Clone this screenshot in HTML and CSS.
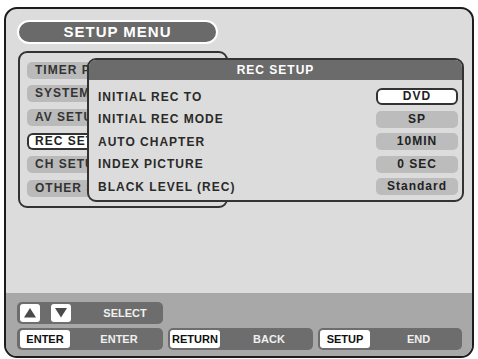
FILE: index.html
```html
<!DOCTYPE html>
<html lang="en">
<head>
    <meta charset="UTF-8">
    <meta name="viewport" content="width=device-width, initial-scale=1.0">
    <title>Setup Menu</title>
    <link rel="stylesheet" href="styles.css">
</head>
<body>
    <div class="screen">
        <div class="main">
            <div class="title">SETUP MENU</div>

            <div class="menu-area">
                <ul class="menu">
                    <li>TIMER PROGRAMMING</li>
                    <li>SYSTEM SETUP</li>
                    <li>AV SETUP</li>
                    <li class="active">REC SETUP</li>
                    <li>CH SETUP</li>
                    <li>OTHER SETUP</li>
                </ul>

                <!-- sub menu opened over the list -->
                <div class="popup">
                    <div class="popup-header">REC SETUP</div>
                    <div class="popup-body">
                        <div class="row">
                            <span class="label">INITIAL REC TO</span>
                            <span class="value selected">DVD</span>
                        </div>
                        <div class="row">
                            <span class="label">INITIAL REC MODE</span>
                            <span class="value">SP</span>
                        </div>
                        <div class="row">
                            <span class="label">AUTO CHAPTER</span>
                            <span class="value">10MIN</span>
                        </div>
                        <div class="row">
                            <span class="label">INDEX PICTURE</span>
                            <span class="value">0 SEC</span>
                        </div>
                        <div class="row">
                            <span class="label">BLACK LEVEL (REC)</span>
                            <span class="value">Standard</span>
                        </div>
                    </div>
                </div>
            </div>
        </div>

        <div class="guide">
            <div class="guide-row">
                <div class="key-group first">
                    <span class="key arrow">
                        <svg width="20" height="18" viewBox="0 0 20 18"><polygon points="4,13.5 16,13.5 10,4" fill="#4a4a4a"/></svg>
                    </span>
                    <span class="key arrow">
                        <svg width="20" height="18" viewBox="0 0 20 18"><polygon points="4,4 16,4 10,13.5" fill="#4a4a4a"/></svg>
                    </span>
                    <span class="guide-label">SELECT</span>
                </div>
            </div>
            <div class="guide-row">
                <div class="key-group first">
                    <span class="key">ENTER</span>
                    <span class="guide-label">ENTER</span>
                </div>
                <div class="key-group second">
                    <span class="key">RETURN</span>
                    <span class="guide-label">BACK</span>
                </div>
                <div class="key-group third">
                    <span class="key">SETUP</span>
                    <span class="guide-label">END</span>
                </div>
            </div>
        </div>
    </div>
</body>
</html>
```

FILE: styles.css
```css
body {
    margin: 0;
    padding: 0;
    background-color: #fff;
    font-family: "Liberation Sans", Arial, sans-serif;
    font-weight: bold;
}

.screen {
    box-sizing: border-box;
    width: 470px;
    height: 351px;
    margin: 7px 0 0 4px;
    border: 2px solid #1c1c1c;
    border-radius: 13px;
    background-color: #dcdcdc;
    overflow: hidden;
    display: flex;
    flex-direction: column;
}

.main {
    flex: 1;
    padding: 11px 0 0 11px;
}

.title {
    box-sizing: border-box;
    width: 201px;
    height: 24px;
    border: 2px solid #fff;
    border-radius: 12px;
    background-color: #6a6a6a;
    color: #fff;
    font-size: 15px;
    letter-spacing: 1px;
    line-height: 20px;
    text-align: center;
}

.menu-area {
    position: relative;
    box-sizing: border-box;
    width: 210px;
    height: 157px;
    margin: 7px 0 0 1px;
    border: 2px solid #333;
    border-radius: 9px;
}

.menu {
    list-style: none;
    margin: 0;
    padding: 8.5px 0 0 7px;
    display: flex;
    flex-direction: column;
    gap: 6.7px;
}

/* items run on under the popup, so clip them at its edge */
.menu li {
    box-sizing: border-box;
    width: 62px;
    height: 17px;
    padding-left: 8px;
    border-radius: 5px 0 0 5px;
    background-color: #bababa;
    color: #333;
    font-size: 12px;
    letter-spacing: 1px;
    line-height: 17px;
    white-space: nowrap;
    overflow: hidden;
}

.menu li.active {
    background-color: #fff;
    border: 2px solid #333;
    border-right: none;
    border-radius: 6px 0 0 6px;
    padding-left: 6px;
    line-height: 13px;
    color: #222;
}

.popup {
    position: absolute;
    left: 67px;
    top: 5px;
    box-sizing: border-box;
    width: 377px;
    height: 144px;
    border: 2px solid #333;
    border-radius: 9px;
    background-color: #dcdcdc;
    overflow: hidden;
}

.popup-header {
    height: 20px;
    background-color: #6b6b6b;
    color: #fff;
    font-size: 12px;
    letter-spacing: 1px;
    line-height: 21px;
    text-align: center;
}

.popup-body {
    padding: 8px 4px 0 9px;
    display: flex;
    flex-direction: column;
    gap: 5.5px;
}

.row {
    display: flex;
    justify-content: space-between;
    align-items: center;
    height: 17px;
}

.label {
    color: #2a2a2a;
    font-size: 12px;
    letter-spacing: 1px;
}

.value {
    box-sizing: border-box;
    width: 82px;
    height: 17px;
    border-radius: 5px;
    background-color: #bcbcbc;
    color: #222;
    font-size: 12px;
    letter-spacing: 1px;
    line-height: 17px;
    text-align: center;
}

.value.selected {
    background-color: #fff;
    border: 2px solid #333;
    border-radius: 6px;
    line-height: 13px;
}

.guide {
    box-sizing: border-box;
    height: 63px;
    padding: 9px 10px 0 11px;
    background-color: #a8a8a8;
    display: flex;
    flex-direction: column;
    gap: 4px;
}

.guide-row {
    display: flex;
    gap: 5px;
    height: 22px;
}

.key-group {
    box-sizing: border-box;
    display: flex;
    align-items: center;
    padding-left: 3px;
    border-radius: 5px;
    background-color: #6d6d6d;
}

.key-group.first {
    width: 146px;
}

.key-group.second {
    width: 145px;
    padding-left: 2px;
}

.key-group.third {
    width: 144px;
    padding-left: 2px;
}

.key {
    box-sizing: border-box;
    width: 50px;
    height: 18px;
    border-radius: 3px;
    background-color: #fff;
    color: #111;
    font-size: 11px;
    line-height: 18px;
    text-align: center;
}

.key.arrow {
    width: 20px;
    margin-right: 11px;
}

.key.arrow svg {
    display: block;
}

.guide-label {
    flex: 1;
    padding-left: 5px;
    color: #f0f0f0;
    font-size: 11px;
    text-align: center;
}
```
